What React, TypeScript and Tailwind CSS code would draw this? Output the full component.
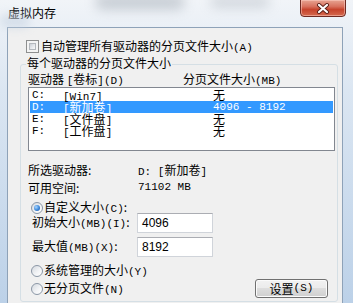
import React from "react";

function Radio({ checked }: { checked?: boolean }) {
  return (
    <div className="w-[12px] h-[12px] rounded-full border border-[#8b97a6] bg-[linear-gradient(135deg,#d4d9df_0%,#f4f5f7_60%,#ffffff_100%)] flex items-center justify-center shrink-0">
      {checked ? (
        <div className="w-[6px] h-[6px] rounded-full bg-[radial-gradient(circle_at_35%_35%,#a9d6ff_0%,#3b87d9_55%,#1b4f9c_100%)]" />
      ) : null}
    </div>
  );
}

export default function App() {
  return (
    <div className="relative w-[353px] h-[303px] overflow-hidden bg-[linear-gradient(180deg,#f1f4f8_0%,#dbe6f2_30%,#bcd1e8_100%)] font-['Noto_Sans_CJK_SC','Noto_Sans',sans-serif] text-[12px] text-black">
      {/* aero glass blurs */}
      <div className="absolute left-[95px] top-[-6px] w-[90px] h-[16px] rounded-full bg-[#8e98a3] opacity-40 blur-[6px]" />
      <div className="absolute left-[210px] top-[-4px] w-[60px] h-[12px] rounded-full bg-[#9aa3ad] opacity-35 blur-[6px]" />
      <div className="absolute left-[0px] top-[14px] w-[30px] h-[14px] rounded-full bg-[#c6d3e2] opacity-60 blur-[5px]" />

      {/* close button */}
      <div className="absolute left-[300px] top-[-1px] w-[46px] h-[18px] rounded-b-[4px] border border-[#6e2a22] bg-[linear-gradient(180deg,#e7a492_0%,#d8725f_40%,#c6432c_60%,#d46a4f_100%)] shadow-[inset_0_0_0_1px_rgba(255,210,200,0.5)] flex items-center justify-center">
        <svg width="14" height="11" viewBox="0 0 14 11">
          <path d="M3 2 L11 9 M11 2 L3 9" stroke="#5a1f18" strokeWidth="4" strokeLinecap="round" />
          <path d="M3 2 L11 9 M11 2 L3 9" stroke="#ffffff" strokeWidth="2.2" strokeLinecap="round" />
        </svg>
      </div>

      {/* title */}
      <div className="h-[27px] pl-[8px] pt-[6px] leading-[14px] text-[12px] text-black">虚拟内存</div>

      {/* panel */}
      <div className="ml-[7px] mr-[10px] h-[290px] border border-[#8ea2b8] bg-[#f0f0f0]">
        {/* auto manage checkbox */}
        <div className="mt-[12px] ml-[18px] flex items-center gap-[2px] h-[13px]">
          <div className="w-[13px] h-[13px] border border-[#8e8f8f] bg-[#f4f4f4] p-[2px] shrink-0">
            <div className="w-full h-full border border-[#b4b8bd] bg-[linear-gradient(135deg,#cbd0d6_0%,#e9ebee_60%,#f8f8f8_100%)]" />
          </div>
          <span className="leading-[13px]">
            自动管理所有驱动器的分页文件大小<span className="font-['Liberation_Mono',monospace] text-[11px]">(A)</span>
          </span>
        </div>

        {/* group box */}
        <div className="relative mt-[11px] ml-[12px] w-[318px] rounded-[3px] border border-[#d5dfe5] pl-[7px] pb-[3px]">
          <div className="absolute left-[5px] top-[-9px] px-[1px] bg-[#f0f0f0] leading-[14px]">每个驱动器的分页文件大小</div>

          <div className="mt-[7px] h-[13px] flex leading-[13px]">
            <span className="w-[155px]">
              驱动器 <span className="font-['Liberation_Mono',monospace] text-[11px]">[</span>卷标<span className="font-['Liberation_Mono',monospace] text-[11px]">](D)</span>
            </span>
            <span>
              分页文件大小<span className="font-['Liberation_Mono',monospace] text-[11px]">(MB)</span>
            </span>
          </div>

          {/* listbox */}
          <div className="mt-[2px] w-[307px] h-[64px] border border-[#828790] bg-white pt-[1px] px-[1px]">
            {[
              { d: "C:", l: "[Win7]", s: "无", sel: false },
              { d: "D:", l: "[新加卷]", s: "4096 - 8192", sel: true },
              { d: "E:", l: "[文件盘]", s: "无", sel: false },
              { d: "F:", l: "[工作盘]", s: "无", sel: false },
            ].map((r) => (
              <div
                key={r.d}
                className={
                  r.sel
                    ? "h-[12px] leading-[12px] flex pl-[2px] bg-[#3399ff] text-white"
                    : "h-[12px] leading-[12px] flex pl-[2px]"
                }
              >
                <span className="w-[31px] font-['Liberation_Mono',monospace] text-[11px]">{r.d}</span>
                <span className="w-[150px]">
                  <span className="font-['Liberation_Mono',monospace] text-[11px]">[</span>
                  <span className={r.l === "[Win7]" ? "font-['Liberation_Mono',monospace] text-[11px]" : ""}>{r.l.slice(1, -1)}</span>
                  <span className="font-['Liberation_Mono',monospace] text-[11px]">]</span>
                </span>
                <span className={r.s === "无" ? "" : "font-['Liberation_Mono',monospace] text-[11px]"}>{r.s}</span>
              </div>
            ))}
          </div>

          {/* selected info */}
          <div className="mt-[11px] flex leading-[15px]">
            <span className="w-[110px]">所选驱动器:</span>
            <span>
              <span className="font-['Liberation_Mono',monospace] text-[11px]">D: [</span>新加卷<span className="font-['Liberation_Mono',monospace] text-[11px]">]</span>
            </span>
          </div>
          <div className="flex leading-[15px]">
            <span className="w-[110px]">可用空间:</span>
            <span className="font-['Liberation_Mono',monospace] text-[11px]">71102 MB</span>
          </div>

          {/* custom size */}
          <div className="mt-[7px] ml-[3px] h-[12px] flex items-center gap-[1px]">
            <Radio checked />
            <span className="leading-[12px]">
              自定义大小<span className="font-['Liberation_Mono',monospace] text-[11px]">(C)</span>:
            </span>
          </div>

          <div className="mt-[-1px] h-[20px] flex items-center">
            <span className="w-[109px] pl-[4px] leading-[13px]">
              初始大小<span className="font-['Liberation_Mono',monospace] text-[11px]">(MB)(I)</span>:
            </span>
            <div className="w-[76px] h-[20px] border border-[#d0d4da] border-t-[#abadb3] bg-white pl-[4px] leading-[18px] font-['Liberation_Sans',sans-serif] text-[12px]">
              4096
            </div>
          </div>

          <div className="mt-[4px] h-[20px] flex items-center">
            <span className="w-[109px] pl-[4px] leading-[13px]">
              最大值<span className="font-['Liberation_Mono',monospace] text-[11px]">(MB)(X)</span>:
            </span>
            <div className="w-[76px] h-[20px] border border-[#d0d4da] border-t-[#abadb3] bg-white pl-[4px] leading-[18px] font-['Liberation_Sans',sans-serif] text-[12px]">
              8192
            </div>
          </div>

          <div className="mt-[8px] ml-[3px] h-[12px] flex items-center gap-[1px]">
            <Radio />
            <span className="leading-[12px]">
              系统管理的大小<span className="font-['Liberation_Mono',monospace] text-[11px]">(Y)</span>
            </span>
          </div>

          <div className="mt-[2px] h-[19px] flex items-center">
            <div className="ml-[3px] flex items-center gap-[1px]">
              <Radio />
              <span className="leading-[12px]">
                无分页文件<span className="font-['Liberation_Mono',monospace] text-[11px]">(N)</span>
              </span>
            </div>
            <div className="ml-auto mr-[9px] w-[73px] h-[19px] rounded-[3px] border border-[#707070] bg-[linear-gradient(180deg,#f2f2f2_0%,#ebebeb_49%,#dddddd_50%,#cfcfcf_100%)] shadow-[inset_0_0_0_1px_#fbfbfb] flex items-center justify-center leading-[13px]">
              设置<span className="font-['Liberation_Mono',monospace] text-[11px]">(S)</span>
            </div>
          </div>
        </div>
      </div>
    </div>
  );
}
